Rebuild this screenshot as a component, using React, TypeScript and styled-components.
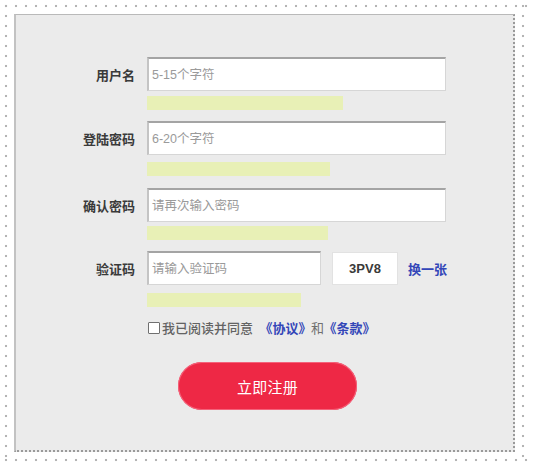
import React from "react";
import styled, { createGlobalStyle } from "styled-components";

const Global = createGlobalStyle`
  html, body { margin: 0; padding: 0; background: #ffffff; overflow: hidden; }
  body { font-family: "Liberation Sans", "Noto Sans CJK SC", sans-serif; }
  * { box-sizing: border-box; }
`;

const dot = "radial-gradient(circle at 5px 5px, #b4b4b4 0.9px, rgba(180,180,180,0) 1.6px)";

const Frame = styled.div`
  width: 527px;
  height: 462px;
  margin: 1px 0 0 1px;
  padding: 13px 0 0 13px;
  background-image: ${dot}, ${dot}, ${dot}, ${dot};
  background-size: 10px 10px;
  background-repeat: repeat-x, repeat-x, repeat-y, repeat-y;
  background-position: left 0 top 0, left 0 bottom -2px, left 0 top 0, right 0 top 0;
`;

const Panel = styled.div`
  width: 501px;
  height: 438px;
  background: #ebebeb;
  border-top: 1px solid #b9b9b9;
  border-left: 2px solid #c2c2c2;
  border-right: 2px dotted #9a9a9a;
  border-bottom: 2px dotted #9a9a9a;
  padding: 42px 0 0 39px;
`;

const Form = styled.form`
  display: flex;
  flex-direction: column;
`;

const Field = styled.div<{ $after: number }>`
  display: flex;
  flex-direction: column;
  margin-bottom: ${(p) => p.$after}px;
`;

const Row = styled.div`
  display: flex;
  align-items: center;
  height: 34px;
`;

const Label = styled.label`
  width: 80px;
  margin-right: 12px;
  text-align: right;
  font-family: "Noto Sans CJK SC", sans-serif;
  font-size: 13px;
  font-weight: 700;
  color: #3a3a3a;
`;

const TextInput = styled.input<{ $w: number }>`
  width: ${(p) => p.$w}px;
  height: 34px;
  background: #ffffff;
  border: 1px solid #d6d6d6;
  border-top: 2px solid #a4a4a4;
  border-left: 2px solid #c4c4c4;
  padding: 0 0 0 3px;
  font-family: "Liberation Sans", "Noto Sans CJK SC", sans-serif;
  font-size: 12.5px;
  color: #333;
  outline: none;
  &::placeholder { color: #9a9a9a; }
`;

const Hint = styled.div<{ $top: number; $w: number }>`
  margin: ${(p) => p.$top}px 0 0 92px;
  width: ${(p) => p.$w}px;
  height: 14px;
  background: #e8f0b6;
`;

const Captcha = styled.div`
  width: 66px;
  height: 33px;
  margin-left: 11px;
  background: #ffffff;
  border: 1px solid #e2e2e2;
  display: flex;
  align-items: center;
  justify-content: center;
  font-family: "Liberation Sans", sans-serif;
  font-size: 13px;
  font-weight: 700;
  color: #3a3a3a;
`;

const Refresh = styled.a`
  margin-left: 10px;
  font-family: "Noto Sans CJK SC", sans-serif;
  font-size: 13px;
  font-weight: 700;
  color: #3346b8;
  text-decoration: none;
`;

const AgreeRow = styled.div`
  display: flex;
  align-items: center;
  height: 17px;
  margin-left: 93px;
  font-family: "Noto Sans CJK SC", sans-serif;
  font-size: 13px;
  color: #5a5a5a;
  font-feature-settings: "halt";
`;

const Check = styled.input`
  appearance: none;
  width: 12px;
  height: 12px;
  margin: 0 2px 0 0;
  border: 1px solid #707070;
  border-radius: 1px;
  background: #fff;
`;

const AgreeText = styled.span`
  font-weight: 500;
  color: #636363;
`;

const Link = styled.a<{ $ml: number }>`
  margin-left: ${(p) => p.$ml}px;
  font-weight: 700;
  color: #3346b8;
  text-decoration: none;
`;

const Conj = styled.span`
  margin-left: 6px;
  color: #707070;
`;

const Submit = styled.button`
  margin: 26px 0 0 123px;
  width: 179px;
  height: 48px;
  border: none;
  border-radius: 24px;
  background: #ee2845;
  box-shadow: 0 0 0 1px #f4627a inset;
  color: #ffffff;
  font-family: "Noto Sans CJK SC", sans-serif;
  font-size: 15px;
  letter-spacing: 0.3px;
  cursor: pointer;
`;

export default function App() {
  return (
    <>
      <Global />
      <Frame>
        <Panel>
          <Form onSubmit={(e) => e.preventDefault()}>
            <Field $after={11}>
              <Row>
                <Label>用户名</Label>
                <TextInput $w={299} placeholder="5-15个字符" />
              </Row>
              <Hint $top={5} $w={196} />
            </Field>
            <Field $after={12}>
              <Row>
                <Label>登陆密码</Label>
                <TextInput $w={299} type="password" placeholder="6-20个字符" />
              </Row>
              <Hint $top={7} $w={183} />
            </Field>
            <Field $after={11}>
              <Row>
                <Label>确认密码</Label>
                <TextInput $w={299} type="password" placeholder="请再次输入密码" />
              </Row>
              <Hint $top={4} $w={181} />
            </Field>
            <Field $after={12}>
              <Row>
                <Label>验证码</Label>
                <TextInput $w={174} placeholder="请输入验证码" />
                <Captcha>3PV8</Captcha>
                <Refresh href="#">换一张</Refresh>
              </Row>
              <Hint $top={8} $w={154} />
            </Field>
            <AgreeRow>
              <Check type="checkbox" />
              <AgreeText>我已阅读并同意</AgreeText>
              <Link href="#" $ml={13}>《协议》</Link>
              <Conj>和</Conj>
              <Link href="#" $ml={6}>《条款》</Link>
            </AgreeRow>
            <Submit type="submit">立即注册</Submit>
          </Form>
        </Panel>
      </Frame>
    </>
  );
}
